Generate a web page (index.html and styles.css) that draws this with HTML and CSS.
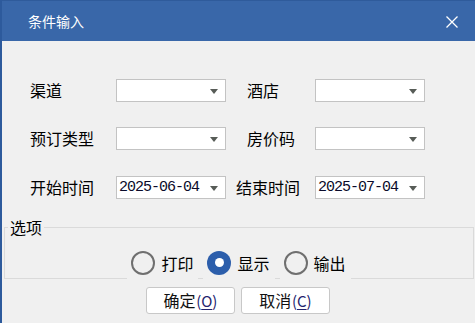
FILE: index.html
```html
<!DOCTYPE html>
<html lang="zh-CN">
<head>
<meta charset="utf-8">
<title>条件输入</title>
<link rel="stylesheet" href="styles.css">
</head>
<body>
<div class="window">
  <div class="titlebar">
    <span class="title">条件输入</span>
    <svg class="close" width="12" height="12" viewBox="0 0 12 12"><path d="M0.5 0.5 L11.5 11.5 M11.5 0.5 L0.5 11.5" stroke="#fff" stroke-width="1.3" fill="none"/></svg>
  </div>
  <div class="form">
    <span class="label">渠道</span>
    <div class="combo"><span class="value"></span><span class="arrow"></span></div>
    <span class="label label-right">酒店</span>
    <div class="combo"><span class="value"></span><span class="arrow"></span></div>

    <span class="label">预订类型</span>
    <div class="combo"><span class="value"></span><span class="arrow"></span></div>
    <span class="label label-right">房价码</span>
    <div class="combo"><span class="value"></span><span class="arrow"></span></div>

    <span class="label row3">开始时间</span>
    <div class="combo row3"><span class="value date">2025-06-04</span><span class="arrow"></span></div>
    <span class="label label-right2 row3">结束时间</span>
    <div class="combo row3"><span class="value date">2025-07-04</span><span class="arrow"></span></div>
  </div>
  <fieldset class="group">
    <legend class="legend">选项</legend>
    <div class="radios">
      <div class="radio"><span class="circle"></span><span class="rtext">打印</span></div>
      <div class="radio"><span class="circle checked"></span><span class="rtext">显示</span></div>
      <div class="radio"><span class="circle"></span><span class="rtext">输出</span></div>
    </div>
  </fieldset>
  <div class="buttons">
    <button class="btn">确定 <span class="acc">(<u>O</u>)</span></button>
    <button class="btn">取消 <span class="acc">(<u>C</u>)</span></button>
  </div>
</div>
</body>
</html>
```
FILE: styles.css
```css
html, body {
  margin: 0;
  padding: 0;
  background: #f0f0f0;
}
body {
  font-family: "Noto Sans CJK SC", "Noto Sans", sans-serif;
  color: #000;
}
.window {
  width: 473px;
  height: 323px;
  border-left: 2px solid #2d5a9c;
  background: #f0f0f0;
  overflow: hidden;
}
.titlebar {
  height: 40px;
  border-top: 1px solid #2f5b9b;
  background: #3967a9;
  display: flex;
  align-items: center;
  justify-content: space-between;
  padding: 0 17px 0 26px;
}
.title {
  color: #fff;
  font-size: 14px;
  line-height: 20px;
  margin-top: -1px;
}
.close {
  display: block;
  margin-top: 1px;
}
.form {
  display: grid;
  grid-template-columns: 86px 110px 89px 110px;
  grid-auto-rows: 23px;
  row-gap: 25px;
  padding: 38px 0 0 28px;
  align-items: center;
}
.label {
  font-size: 16px;
  line-height: 23px;
  white-space: nowrap;
}
.label-right { padding-left: 21px; }
.label-right2 { padding-left: 10px; }
.row3 { margin-top: 2px; }
.combo {
  height: 23px;
  box-sizing: border-box;
  border: 1px solid #c3c3c3;
  background: #fff;
  display: flex;
  align-items: center;
  justify-content: space-between;
  padding: 0 7px 0 2px;
}
.value {
  flex: 1;
}
.date {
  font-family: "Liberation Mono", monospace;
  font-size: 15px;
  letter-spacing: -1px;
  color: #0a0a2a;
  line-height: 21px;
}
.arrow {
  width: 0;
  height: 0;
  border-left: 4.5px solid transparent;
  border-right: 4.5px solid transparent;
  border-top: 5px solid #575c57;
  margin-top: 1px;
}
.group {
  margin: 19px 1px 0 2px;
  padding: 0 0 0 3px;
  border: 1px solid #dadada;
  min-width: 0;
  height: 62px;
  box-sizing: border-box;
}
.legend {
  font-size: 16px;
  line-height: 20px;
  padding: 0 2px;
}
.radios {
  display: flex;
  justify-content: center;
  gap: 5px;
  margin-left: -3px;
  margin-top: 9px;
}
.radio {
  display: flex;
  align-items: center;
  gap: 6px;
  padding: 3px 5px 6px 4px;
  height: 27px;
  background: #f0f0f0;
}
.circle {
  width: 24px;
  height: 24px;
  box-sizing: border-box;
  border: 2px solid #6f6f6f;
  border-radius: 50%;
  display: flex;
  align-items: center;
  justify-content: center;
}
.circle.checked {
  border: none;
  background: #2c5eab;
}
.circle.checked::after {
  content: "";
  width: 9px;
  height: 9px;
  border-radius: 50%;
  background: #fff;
}
.rtext {
  font-size: 16px;
  line-height: 24px;
}
.buttons {
  display: flex;
  justify-content: center;
  gap: 6px;
  margin-top: 8px;
  padding-right: 1px;
}
.btn {
  width: 89px;
  height: 27px;
  box-sizing: border-box;
  border: 1px solid #c8c8c8;
  border-radius: 3px;
  background: #fff;
  font-family: "Noto Sans CJK SC", "Noto Sans", sans-serif;
  font-size: 16px;
  line-height: 24px;
  padding: 0;
  color: #111;
  word-spacing: -3px;
}
.acc {
  color: #23236e;
  font-size: 15px;
}
.acc u {
  text-underline-offset: 2px;
}
```
